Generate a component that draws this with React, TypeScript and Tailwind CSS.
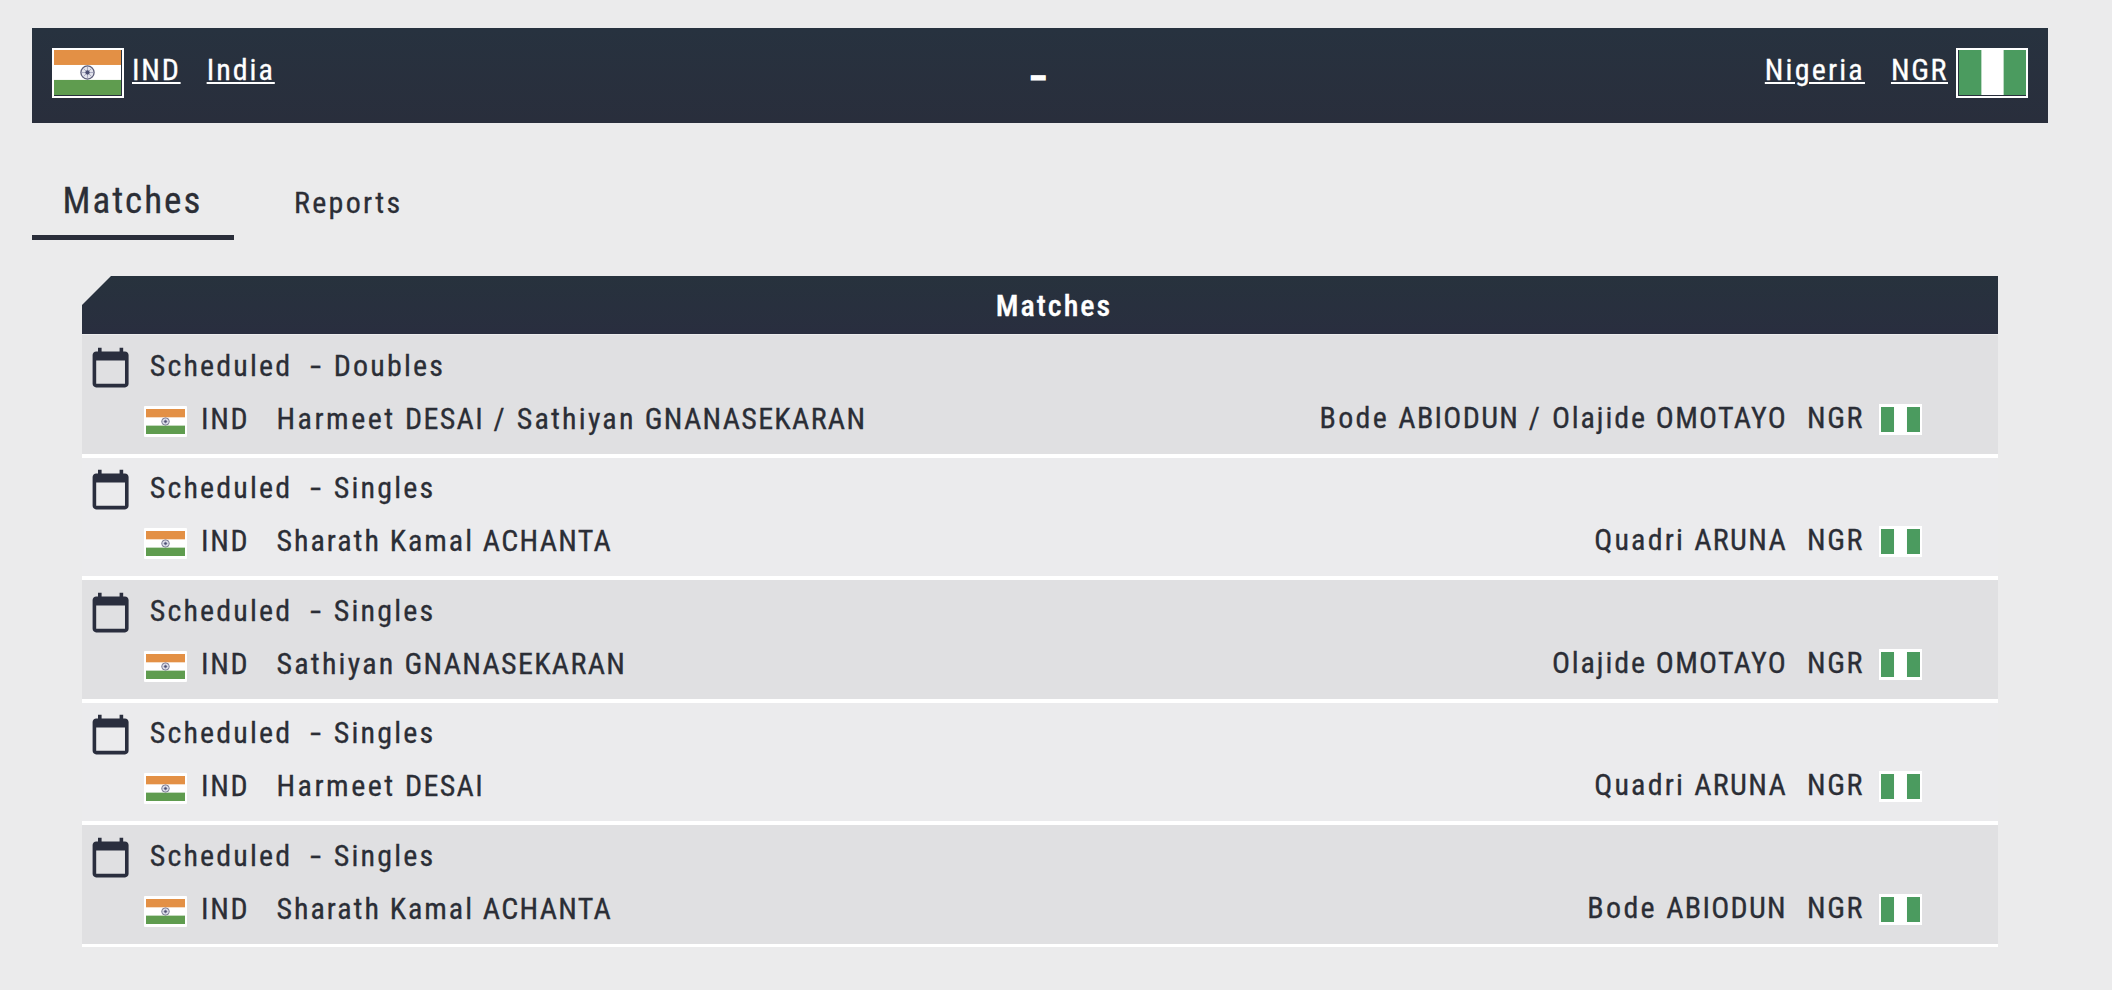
import clsx from "clsx";

type Team = "IND" | "NGR";

type Player = {
  given: string;
  surname: string;
  spacing: string;
};

type Match = {
  type: "Doubles" | "Singles";
  home: Player[];
  away: Player[];
};

const harmeet: Player = { given: "Harmeet", surname: "DESAI", spacing: "tracking-[2.5px]" };
const sathiyan: Player = { given: "Sathiyan", surname: "GNANASEKARAN", spacing: "tracking-[2.2px]" };
const sharath: Player = { given: "Sharath Kamal", surname: "ACHANTA", spacing: "tracking-[1.95px]" };
const bode: Player = { given: "Bode", surname: "ABIODUN", spacing: "tracking-[2.3px]" };
const olajide: Player = { given: "Olajide", surname: "OMOTAYO", spacing: "tracking-[1.9px]" };
const quadri: Player = { given: "Quadri", surname: "ARUNA", spacing: "tracking-[2.2px]" };

const matches: Match[] = [
  { type: "Doubles", home: [harmeet, sathiyan], away: [bode, olajide] },
  { type: "Singles", home: [sharath], away: [quadri] },
  { type: "Singles", home: [sathiyan], away: [olajide] },
  { type: "Singles", home: [harmeet], away: [quadri] },
  { type: "Singles", home: [sharath], away: [bode] },
];

function Flag({ team, className }: { team: Team; className?: string }) {
  return (
    <svg viewBox="0 0 68 46" preserveAspectRatio="none" className={clsx("shrink-0", className)}>
      {team === "IND" ? (
        <>
          <rect width="68" height="46" fill="#fff" />
          <rect width="68" height="15.3" fill="#e39045" />
          <rect y="30.6" width="68" height="15.4" fill="#5f9c4f" />
          <circle cx="34" cy="23" r="6.7" fill="#e2e3ec" stroke="#5a5c78" strokeWidth="1.3" />
          <path
            d="M34 17v12M28 23h12M29.8 18.8l8.4 8.4M38.2 18.8l-8.4 8.4"
            stroke="#9193b0"
            strokeWidth="0.7"
          />
          <circle cx="34" cy="23" r="2.2" fill="#4b4e72" />
        </>
      ) : (
        <>
          <rect width="68" height="46" fill="#fff" />
          <rect width="22.7" height="46" fill="#4b9b5f" />
          <rect x="45.3" width="22.7" height="46" fill="#4b9b5f" />
        </>
      )}
    </svg>
  );
}

function CalendarIcon() {
  return (
    <svg viewBox="0 0 24 24" fill="currentColor" className="size-[43.2px] shrink-0 text-[#2a2e3e]">
      <path d="M20 3h-1V1h-2v2H7V1H5v2H4c-1.1 0-2 .9-2 2v16c0 1.1.9 2 2 2h16c1.1 0 2-.9 2-2V5c0-1.1-.9-2-2-2zm0 18H4V8h16v13z" />
    </svg>
  );
}

function Players({ players }: { players: Player[] }) {
  return (
    <span>
      {players.map((player, i) => (
        <span key={player.surname}>
          {i > 0 && <span className="tracking-[2.6px]"> / </span>}
          <span className={player.spacing}>{player.given} </span>
          <span className="tracking-[1.3px]">{player.surname}</span>
        </span>
      ))}
    </span>
  );
}

function MatchRow({ match }: { match: Match }) {
  return (
    <li className="h-[118.5px] bg-[#ebebed] pt-[10.6px] odd:bg-[#e0e0e2]">
      <div className="flex h-10 items-start pl-[7px]">
        <CalendarIcon />
        <span className="ml-[17.5px] w-[160px] tracking-[2.15px]">Scheduled</span>
        <span className="w-[24px] origin-left scale-x-150">-</span>
        <span className="tracking-[2.2px]">{match.type}</span>
      </div>
      <div className="mt-[13px] flex h-10 items-start justify-between pl-[62px] pr-[76px]">
        <div className="flex">
          <Flag team="IND" className="mt-[7px] h-[31px] w-[43px] rounded-[1px] border-x-2 border-y-3 border-white" />
          <span className="ml-[14px] w-[75.5px] tracking-[1.7px]">IND</span>
          <Players players={match.home} />
        </div>
        <div className="-mt-px flex">
          <Players players={match.away} />
          <span className="ml-[20px] w-[72px] tracking-[1.6px]">NGR</span>
          <Flag team="NGR" className="mt-[6px] h-[31px] w-[43px] border-x-2 border-y-3 border-white" />
        </div>
      </div>
    </li>
  );
}

export default function App() {
  return (
    <main className="min-h-screen bg-[#ebebec] pt-7 font-['Roboto_Condensed','Roboto',sans-serif] text-[30px] leading-10 whitespace-pre text-[#2b2e36] [-webkit-text-stroke:0.3px]">
      <header className="mx-8 mr-16 flex h-[95px] items-start justify-between bg-linear-to-b from-[#27323f] to-[#292e3c] px-5 text-white">
        <div className="flex w-[400px]">
          <Flag team="IND" className="mt-5 h-[50px] w-[72px] border-2 border-white pr-px pb-px" />
          <a href="#" className="mt-[22px] ml-2 tracking-[1.8px] underline decoration-2 underline-offset-[2px]">
            IND
          </a>
          <a href="#" className="mt-[22px] ml-[26px] tracking-[2px] underline decoration-2 underline-offset-[2px]">
            India
          </a>
        </div>
        <span className="mt-[29px] mr-[3px] h-10 scale-x-160 text-[36px] font-bold [-webkit-text-stroke:0.8px]">-</span>
        <div className="flex w-[400px] justify-end">
          <a href="#" className="mt-[22px] tracking-[2.2px] underline decoration-2 underline-offset-[2px]">
            Nigeria
          </a>
          <a href="#" className="mt-[22px] ml-[26px] tracking-[1.6px] underline decoration-2 underline-offset-[2px]">
            NGR
          </a>
          <Flag team="NGR" className="mt-5 ml-2 h-[50px] w-[72px] border-2 border-white pb-px pl-px" />
        </div>
      </header>

      <nav className="mt-10 flex h-[77px] items-start pl-8">
        <button className="flex h-full w-[202px] items-start border-b-5 border-[#2a2e3a] pt-[17.5px] pl-[30.5px] text-[37px] leading-10 tracking-[2px]">
          Matches
        </button>
        <button className="pt-[20px] pl-[60px] tracking-[2.3px]">Reports</button>
      </nav>

      <section className="mt-9 ml-[82px] w-[1916px]">
        <h2 className="mb-px flex h-[58px] items-center justify-center bg-linear-to-b from-[#27323d] to-[#292e3f] pt-[2px] pl-7 font-medium tracking-[2px] text-white [clip-path:polygon(29px_0,100%_0,100%_100%,0_100%,0_29px)]">
          Matches
        </h2>
        <ul className="flex flex-col gap-1 bg-white pb-[3.5px]">
          {matches.map((match, i) => (
            <MatchRow key={i} match={match} />
          ))}
        </ul>
      </section>
    </main>
  );
}
